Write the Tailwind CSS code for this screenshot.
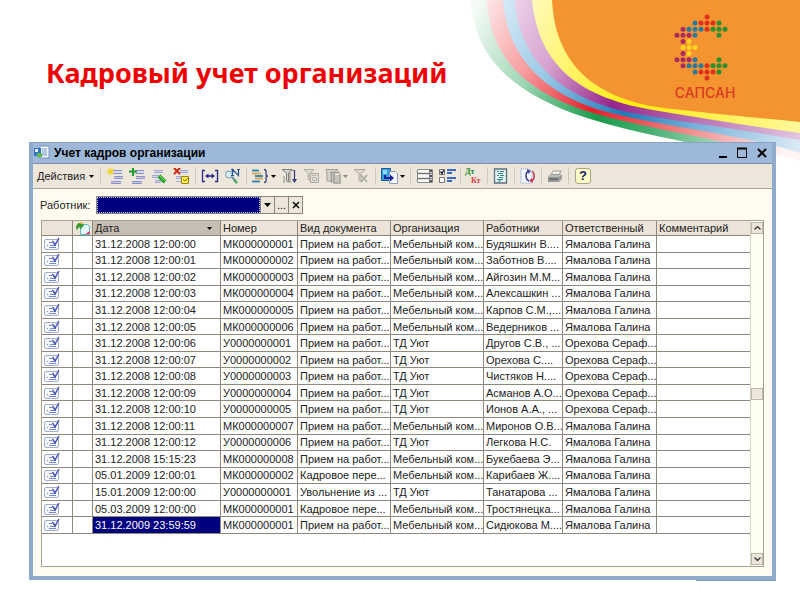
<!DOCTYPE html>
<html lang="ru">
  <head>
    <meta charset="UTF-8" />
    <meta name="viewport" content="width=device-width, initial-scale=1.0" />
    <title>Кадровый учет организаций</title>
    <script src="https://cdn.jsdelivr.net/npm/@tailwindcss/browser@4"></script>
  </head>
  <body class="relative min-h-screen overflow-x-hidden bg-white pb-4 font-['Liberation_Sans',Arial,sans-serif] text-[11px] leading-[14px] text-[#222222]">
    <!-- Фон: цветные полосы и логотип -->
    <svg class="absolute top-0 right-0 h-[180px] w-[340px]" viewBox="460 0 340 180" aria-label="САПСАН">
      <defs>
        <linearGradient id="g-green" gradientUnits="userSpaceOnUse" x1="480" y1="0" x2="800" y2="160">
          <stop offset="0" stop-color="#f4fbf6" /><stop offset="0.2" stop-color="#a4d8b8" /><stop offset="0.44" stop-color="#199a4c" /><stop offset="0.6" stop-color="#4cb176" /><stop offset="0.95" stop-color="#ffffff" />
        </linearGradient>
        <linearGradient id="g-red" gradientUnits="userSpaceOnUse" x1="480" y1="0" x2="800" y2="160">
          <stop offset="0" stop-color="#fdeeee" /><stop offset="0.2" stop-color="#f79c9e" /><stop offset="0.42" stop-color="#e4202a" /><stop offset="0.6" stop-color="#ea6a6a" /><stop offset="0.95" stop-color="#fff4f4" />
        </linearGradient>
        <linearGradient id="g-blue" gradientUnits="userSpaceOnUse" x1="480" y1="0" x2="800" y2="160">
          <stop offset="0" stop-color="#e9f4fb" /><stop offset="0.25" stop-color="#9dcbe6" /><stop offset="0.5" stop-color="#2079b8" /><stop offset="0.7" stop-color="#7ab0d8" /><stop offset="1" stop-color="#e2eff8" />
        </linearGradient>
        <linearGradient id="g-purple" gradientUnits="userSpaceOnUse" x1="480" y1="0" x2="800" y2="160">
          <stop offset="0" stop-color="#f6eaf5" /><stop offset="0.25" stop-color="#d7a3d0" /><stop offset="0.46" stop-color="#96268a" /><stop offset="0.7" stop-color="#b875b5" /><stop offset="1" stop-color="#e8cfe6" />
        </linearGradient>
        <linearGradient id="g-yellow" gradientUnits="userSpaceOnUse" x1="480" y1="0" x2="800" y2="160">
          <stop offset="0.05" stop-color="#fffde0" /><stop offset="0.52" stop-color="#ffec0a" /><stop offset="0.7" stop-color="#fff04a" /><stop offset="1" stop-color="#fffaa8" />
        </linearGradient>
      </defs>
      <path fill="url(#g-green)" d="M471 0C473 50 505 92 587 118C650 138 730 148 800 170V0Z" />
      <path fill="url(#g-red)" d="M487 0C489 56 525 92 590 112C650 130 730 140 800 161V0Z" />
      <path fill="url(#g-blue)" d="M503 0C506 52 540 94 607 112C660 126 740 134 800 153V0Z" />
      <path fill="url(#g-purple)" d="M515 0C518 55 555 96 627 112C680 122 740 129 800 140V0Z" />
      <path fill="url(#g-yellow)" d="M532 0C538 58 570 96 653 110C700 118 750 126 800 133V0Z" />
      <path fill="#f49430" d="M552 0C555 60 590 101 673 109C715 114 760 118 800 122V0Z" />
      <g id="dots"></g>
      <text x="705" y="98" text-anchor="middle" fill="#d93a20" class="font-['Inter',sans-serif] text-[14px] font-medium">САПСАН</text>
    </svg>

    <header class="flex h-[142px] items-start pt-[55px] pl-[46px]">
      <h1 class="font-['Noto_Sans',sans-serif] text-[27px] leading-9 font-bold text-[#f00000]">Кадровый учет организаций</h1>
    </header>

    <!-- Окно -->
    <main class="relative mr-6 ml-[29px] border-x-4 border-b-4 border-[#8fabcc] bg-[#fffbf0]">
      <div class="flex h-[21px] items-center border-t border-[#88a3c4] bg-[#9db8d8]">
        <svg class="ml-px size-4" viewBox="0 0 16 16">
          <rect x="6" y="1" width="9" height="12" fill="#f3f8ff" stroke="#7d94bb" />
          <path d="M8 4h5M8 6h5M8 8h5M8 10h5" stroke="#6d9ad0" />
          <path fill="#3270cc" d="M0 3h7v8H0z" /><path fill="#63b84c" d="M3 8h5v4H3z" /><path fill="#e8f0ff" d="M1 4h3v3H1z" />
        </svg>
        <h2 class="ml-1 grow text-[12px] font-bold text-black">Учет кадров организации</h2>
        <div class="flex text-black">
          <button class="flex h-5 w-5 items-center justify-center" aria-label="Свернуть"><svg class="size-3" viewBox="0 0 12 12"><path d="M3 10h8" stroke="currentColor" stroke-width="2" /></svg></button>
          <button class="flex h-5 w-5 items-center justify-center" aria-label="Развернуть"><svg class="size-3" viewBox="0 0 12 12"><path d="M1.500 1.500h9v9h-9z" fill="none" stroke="currentColor" /><path d="M1 1.500h10" stroke="currentColor" stroke-width="2" /></svg></button>
          <button class="flex h-5 w-5 items-center justify-center" aria-label="Закрыть"><svg class="size-3" viewBox="0 0 12 12"><path d="M2 2l8 8M10 2l-8 8" stroke="currentColor" stroke-width="2" /></svg></button>
        </div>
      </div>

      <!-- Панель инструментов -->
      <div class="flex h-[26px] items-center border-y border-t-[#8090a8] border-b-[#aaa598] bg-[#ece6db]">
        <button class="flex h-5 w-16 items-center gap-1 pl-1">Действия
          <svg class="h-[3px] w-[5px]" viewBox="0 0 5 3"><path d="M0 0h5L2.500 3z" /></svg>
        </button>
        <span class="mx-[3px] h-[18px] w-px bg-[#d2cbbd]"></span>
        <button class="flex w-[22px] justify-center" aria-label="Добавить">
          <svg class="size-4" viewBox="0 0 16 16"><path d="M6 2.500h9M6 5.500h9M7 8.500h9M7 10.500h9M4 13.500h10M4 15.500h10" stroke="#8b90c8" /><path d="M6 4h9M7 9.500h9M4 14.500h10" stroke="#c9cbea" /><path d="M3.500 0v7M0 3.500h7M1 1l5 5M6 1L1 6" stroke="#f4d422" stroke-width="1.200" /></svg>
        </button>
        <button class="flex w-[22px] justify-center" aria-label="Скопировать">
          <svg class="size-4" viewBox="0 0 16 16"><path d="M6 2.500h9M6 5.500h9M7 8.500h9M7 10.500h9M3 13.500h10M3 15.500h10" stroke="#8b90c8" /><path d="M6 4h9M7 9.500h9M3 14.500h10" stroke="#c9cbea" /><path d="M4 0v8M0 3.500h8" stroke="#1d9a2e" stroke-width="2" /></svg>
        </button>
        <button class="flex w-[22px] justify-center" aria-label="Изменить">
          <svg class="size-4" viewBox="0 0 16 16"><path d="M3 2.500h9M3 4.500h9M1 7.500h9M1 9.500h9M4 12.500h6M4 14.500h6" stroke="#a4a7d2" /><path d="M1 8.500h9M3 3.500h9M4 13.500h6" stroke="#d2d3ec" /><path d="M8 8l6 6" stroke="#27a32e" stroke-width="4" /><path d="M9 8l5 5" stroke="#82dc6e" /></svg>
        </button>
        <button class="flex w-[22px] justify-center" aria-label="Пометить на удаление">
          <svg class="size-4" viewBox="0 0 16 16"><path d="M7 2.500h8M7 4.500h8M3 8.500h6M3 10.500h6M3 13.500h5" stroke="#a4a7d2" /><path d="M7 3.500h8M3 9.500h6" stroke="#d2d3ec" /><path d="M1 0l6 6M7 0L1 6" stroke="#d02818" stroke-width="2" /><path d="M8.500 8.500h7v7h-7z" fill="#ffed4a" stroke="#98871c" /><path d="M10 11l2 2 3-3" fill="none" stroke="#8a7010" /></svg>
        </button>
        <span class="mx-[3px] h-[18px] w-px bg-[#d2cbbd]"></span>
        <button class="flex w-[22px] justify-center" aria-label="Интервал дат">
          <svg class="h-4 w-[18px]" viewBox="0 0 18 16"><path d="M4 2.500H1.500v11H4M14 2.500h2.500v11H14M5 8h8" fill="none" stroke="#2a2a8c" stroke-width="1.300" /><path d="M4 8l3.500-2.500v5zM14 8l-3.500-2.500v5z" fill="#2a2a8c" /></svg>
        </button>
        <button class="flex w-[22px] justify-center" aria-label="Найти по номеру">
          <svg class="size-4" viewBox="0 0 16 16"><circle cx="5" cy="6.500" r="3.500" fill="#d8f3f8" stroke="#6d98aa" /><path d="M8 9l5 6" stroke="#6d98a0" stroke-width="2" /><path d="M10 12l3 3" stroke="#3eb04a" stroke-width="2" /><path d="M8.500 8V1.500l6 6V1M7 1.500h3M13 1.500h3M7 7.500h3" fill="none" stroke="#29569c" stroke-width="1.200" /></svg>
        </button>
        <span class="mx-[3px] h-[18px] w-px bg-[#d2cbbd]"></span>
        <button class="flex w-7 items-center gap-0.5" aria-label="Ввести на основании">
          <svg class="ml-px h-4 w-[18px]" viewBox="0 0 18 16"><path d="M1 2.500h7M4 8h8M1 13.500h8" stroke="#3e8eb0" stroke-width="2" /><path d="M1 5.500h9M4 10.500h8" stroke="#d4a860" stroke-width="2" /><path d="M13 1.500c3 0 2 3 2 4.500s.5 2 2 2c-1.500 0-2 .5-2 2s1 4.500-2 4.500" fill="none" stroke="#414178" stroke-width="1.300" /></svg>
          <svg class="h-[3px] w-[5px]" viewBox="0 0 5 3"><path d="M0 0h5L2.500 3z" /></svg>
        </button>
        <button class="flex w-[22px] justify-center" aria-label="Отбор и сортировка">
          <svg class="size-4" viewBox="0 0 16 16"><path d="M1 1.500h10L7.500 5v9l-2-1V5z" fill="#d8d8d4" stroke="#82827e" /><path d="M3 8v7M9 4v11M10 2.500h4" stroke="#8a8a88" /><path d="M13.500 2v12" stroke="#3c3c84" stroke-width="1.300" /><path d="M11 11h5l-2.500 4z" fill="#3c3c84" /></svg>
        </button>
        <button class="flex w-[22px] justify-center" aria-label="Отбор по значению">
          <svg class="size-4" viewBox="0 0 16 16"><path d="M1 1.500h10L7 5.500v7l-2-1v-6z" fill="#dedad1" stroke="#b1aea5" /><path d="M7.500 5.500h8v9h-8z" fill="#e4e1d9" stroke="#aaa79f" /><path d="M9 7.500h5M9.500 9.500h4v3h-4z" stroke="#b5b3ac" fill="none" /></svg>
        </button>
        <button class="flex w-7 items-center gap-0.5" aria-label="История отборов">
          <svg class="ml-[3px] size-4" viewBox="0 0 16 16"><path d="M1 1.500h12L9 5v8H2V5z" fill="#d6d3ca" stroke="#a19f98" /><path d="M5 4.500h10M6.500 5v10M9 6v9h6V6" fill="none" stroke="#a19f98" stroke-width="1.500" /><path d="M10 7h4v7h-4z" fill="#c7c5be" /></svg>
          <svg class="h-[3px] w-[5px]" viewBox="0 0 5 3"><path fill="#8a877f" d="M0 0h5L2.500 3z" /></svg>
        </button>
        <button class="flex w-[22px] justify-center" aria-label="Отключить отбор">
          <svg class="size-4" viewBox="0 0 16 16"><path d="M1 1.500h11L8 5.500v8l-2-1v-7z" fill="#dedad1" stroke="#aaa79f" /><path d="M8 7l6 7M14 7l-6 7" stroke="#a8a69f" stroke-width="1.500" /></svg>
        </button>
        <span class="mx-[3px] h-[18px] w-px bg-[#d2cbbd]"></span>
        <button class="flex w-7 items-center gap-0.5" aria-label="Перейти">
          <svg class="ml-0.5 h-4 w-[17px]" viewBox="0 0 17 16"><path d="M.5.500h9v12h-9z" fill="#2fa0e0" stroke="#1c5b94" /><path d="M2 2h4v4H2z" fill="#8fe0f6" /><path d="M8.500 3.500h6l2 2v10h-8z" fill="#f4f7fc" stroke="#8d9db4" /><path d="M4 7v3h6" fill="none" stroke="#20209a" stroke-width="2" /><path d="M9 6.500v7l4-3.500z" fill="#20209a" /></svg>
          <svg class="h-[3px] w-[5px]" viewBox="0 0 5 3"><path d="M0 0h5L2.500 3z" /></svg>
        </button>
        <span class="mx-[3px] h-[18px] w-px bg-[#d2cbbd]"></span>
        <button class="flex w-[22px] justify-center" aria-label="Список">
          <svg class="size-4" viewBox="0 0 16 16"><path d="M.5 1.500h15v13H.5z" fill="#fff" stroke="#8a8a8a" /><path d="M0 5.500h16M0 10.500h16" stroke="#777" stroke-width="1.500" /><path d="M12.500 1v14" stroke="#777" /><path d="M13 2h2v2h-2zM13 7h2v2h-2zM13 12h2v2h-2z" fill="#555" /></svg>
        </button>
        <button class="flex w-[22px] justify-center" aria-label="Настройка списка">
          <svg class="h-4 w-[17px]" viewBox="0 0 17 16"><path d="M.5 1.500h5v5h-5zM.5 9.500h5v5h-5z" fill="#fff" stroke="#777" /><path d="M1.500 3.500l1.500 2 2-3.500" fill="none" stroke="#111" stroke-width="1.300" /><path d="M8 2h9M8 10h9" stroke="#3c68c0" stroke-width="2" /><path d="M8 5h5M8 13h5" stroke="#3c68c0" stroke-width="2" /></svg>
        </button>
        <span class="mx-0.5 h-[18px] w-px bg-[#d2cbbd]"></span>
        <button class="flex w-[22px] flex-col pl-0.5 text-left font-['Liberation_Serif',serif] text-[8px] leading-[9px] font-bold" aria-label="Проводки">
          <span class="text-[#1f8a2c]">Дт</span><span class="pl-1.5 text-[#e04040]">Кт</span>
        </button>
        <span class="mx-0.5 h-[18px] w-px bg-[#d2cbbd]"></span>
        <button class="flex w-[22px] justify-center" aria-label="Журнал">
          <svg class="size-4" viewBox="0 0 16 16"><path d="M1.500 1h12v14h-12z" fill="#e9f3f4" stroke="#587080" stroke-width="1.300" /><path d="M4 3.500h2M7 3.500h4M5 5.500h5M4 7.500h2M7 7.500h4M6 9.500h4M4 11.500h6M5 13h3" stroke="#2f8a92" /></svg>
        </button>
        <span class="mx-0.5 h-[18px] w-px bg-[#d2cbbd]"></span>
        <button class="flex w-[22px] justify-center" aria-label="Обновить">
          <svg class="size-4" viewBox="0 0 16 16"><path d="M1 1h8l3 3v11H1z" fill="#f3f7ff" stroke="#7fa2da" stroke-dasharray="1 1" /><path d="M9 3c-4 1-4 8 0 10" fill="none" stroke="#40409c" stroke-width="1.500" /><path d="M7 1l4 2-3 3z" fill="#40409c" /><path d="M11 13c4-1 4-8 1-10" fill="none" stroke="#c83c58" stroke-width="1.500" /><path d="M13 15l-4-2 3-3z" fill="#c83c58" /></svg>
        </button>
        <span class="mx-0.5 h-[18px] w-px bg-[#d2cbbd]"></span>
        <button class="flex w-[22px] justify-center" aria-label="Печать">
          <svg class="size-4" viewBox="0 0 16 16"><path d="M4 7l2-4h8l-2 4z" fill="#f1f0ed" stroke="#9a9a98" /><path d="M1 8l3-2h11v5l-3 3H1z" fill="#9b9b9a" /><path d="M1 8h11l3-2" fill="none" stroke="#dcdcda" /><path d="M2 11h9" stroke="#636363" stroke-width="1.500" /></svg>
        </button>
        <span class="mx-0.5 h-[18px] w-px bg-[#d2cbbd]"></span>
        <button class="ml-1 flex size-4 items-center justify-center rounded-[3px] border border-[#a9a58a] bg-[#ffffc8] text-[13px] leading-[14px] font-bold text-[#1c1c6e]" aria-label="Справка">?</button>
      </div>

      <!-- Отбор по работнику -->
      <div class="flex h-[31px] items-center pl-[7px]">
        <label for="worker" class="w-14">Работник:</label>
        <input id="worker" type="text" class="h-[18px] w-[165px] border border-[#8c877c] bg-[#000080] px-1 text-white outline-1 -outline-offset-2 outline-dotted outline-[#c8c8e8]" />
        <button class="flex h-[18px] w-[14px] items-center justify-center border-y border-r border-[#8c877c] bg-[#ece6db]" aria-label="Выбрать"><svg class="h-1 w-[7px]" viewBox="0 0 7 4"><path d="M0 0h7L3.500 4z" /></svg></button>
        <button class="h-[18px] w-[14px] border-y border-r border-[#8c877c] bg-[#ece6db] text-black">...</button>
        <button class="flex h-[18px] w-[14px] items-center justify-center border-y border-r border-[#8c877c] bg-[#ece6db]" aria-label="Очистить"><svg class="size-2" viewBox="0 0 8 8"><path d="M1 1l6 6M7 1L1 7" stroke="#111" stroke-width="1.600" /></svg></button>
      </div>

      <!-- Список документов -->
      <div class="mr-2 mb-[9px] ml-2 flex border border-[#a8a294] bg-white">
        <div class="min-h-[345px] min-w-0 grow">
          <table class="h-[313px] w-full table-fixed border-separate border-spacing-0 whitespace-nowrap">
            <colgroup>
              <col class="w-[31px]" /><col class="w-5" /><col class="w-[128px]" /><col class="w-[77px]" /><col class="w-[93px]" /><col class="w-[93px]" /><col class="w-[79px]" /><col class="w-[94px]" /><col />
            </colgroup>
            <thead class="bg-[#ece4d9] text-left">
              <tr>
                <th class="border-r border-b border-[#8f897c] p-0"></th>
                <th class="border-r border-b border-[#8f897c] p-0">
                  <svg class="mx-auto h-[14px] w-4" viewBox="0 0 16 14"><path d="M5.500 3.500h7l2 2v8h-9z" fill="#e4f8fa" stroke="#58b8c4" /><path d="M1 7c0-5 5-7 8-3L6 8 4 6 2 9z" fill="#3c9a34" /><path d="M4 3l3-2 1 2z" fill="#e0b030" /><path d="M10 13l5-3v3z" fill="#e04070" /></svg>
                </th>
                <th class="border-r border-b border-[#8f897c] bg-[#c6beb3] p-0 pr-2 pl-0.5 font-normal">
                  <div class="flex items-center justify-between">Дата<svg class="h-[3px] w-[5px]" viewBox="0 0 5 3"><path d="M0 0h5L2.500 3z" /></svg></div>
                </th>
                <th class="border-r border-b border-[#8f897c] p-0 pl-0.5 font-normal">Номер</th>
                <th class="border-r border-b border-[#8f897c] p-0 pl-0.5 font-normal">Вид документа</th>
                <th class="border-r border-b border-[#8f897c] p-0 pl-0.5 font-normal">Организация</th>
                <th class="border-r border-b border-[#8f897c] p-0 pl-0.5 font-normal">Работники</th>
                <th class="border-r border-b border-[#8f897c] p-0 pl-0.5 font-normal">Ответственный</th>
                <th class="border-b border-[#8f897c] p-0 pl-0.5 font-normal">Комментарий</th>
              </tr>
            </thead>
            <tbody id="rows"></tbody>
          </table>
        </div>
        <div class="flex w-[15px] flex-col items-center justify-between border-l border-[#d8d4c4] bg-[#fffff4] py-px">
          <button class="flex h-3 w-3 items-center justify-center border border-[#bdb8a8] bg-[#ece6db]" aria-label="Вверх"><svg class="h-1 w-[7px]" viewBox="0 0 7 4"><path d="M.5 3.500l3-3 3 3" fill="none" stroke="#333" stroke-width="1.300" /></svg></button>
          <span class="h-3 w-3 border border-[#bdb8a8] bg-[#ece6db]"></span>
          <button class="flex h-3 w-3 items-center justify-center border border-[#bdb8a8] bg-[#ece6db]" aria-label="Вниз"><svg class="h-1 w-[7px]" viewBox="0 0 7 4"><path d="M.5.500l3 3 3-3" fill="none" stroke="#333" stroke-width="1.300" /></svg></button>
        </div>
      </div>
    </main>
    <div class="mr-6 ml-auto h-px w-20 bg-[#8a9cb4]"></div>

    <script>
      const docs = [
        ["31.12.2008 12:00:00", "МК000000001", "Прием на работ...", "Мебельный ком...", "Будяшкин В....", "Ямалова Галина"],
        ["31.12.2008 12:00:01", "МК000000002", "Прием на работ...", "Мебельный ком...", "Заботнов В....", "Ямалова Галина"],
        ["31.12.2008 12:00:02", "МК000000003", "Прием на работ...", "Мебельный ком...", "Айгозин М.М...", "Ямалова Галина"],
        ["31.12.2008 12:00:03", "МК000000004", "Прием на работ...", "Мебельный ком...", "Алексашкин ...", "Ямалова Галина"],
        ["31.12.2008 12:00:04", "МК000000005", "Прием на работ...", "Мебельный ком...", "Карпов С.М.,...", "Ямалова Галина"],
        ["31.12.2008 12:00:05", "МК000000006", "Прием на работ...", "Мебельный ком...", "Ведерников ...", "Ямалова Галина"],
        ["31.12.2008 12:00:06", "У0000000001", "Прием на работ...", "ТД Уют", "Другов С.В., ...", "Орехова Сераф..."],
        ["31.12.2008 12:00:07", "У0000000002", "Прием на работ...", "ТД Уют", "Орехова С....", "Орехова Сераф..."],
        ["31.12.2008 12:00:08", "У0000000003", "Прием на работ...", "ТД Уют", "Чистяков Н....", "Орехова Сераф..."],
        ["31.12.2008 12:00:09", "У0000000004", "Прием на работ...", "ТД Уют", "Асманов А.О...", "Орехова Сераф..."],
        ["31.12.2008 12:00:10", "У0000000005", "Прием на работ...", "ТД Уют", "Ионов А.А., ...", "Орехова Сераф..."],
        ["31.12.2008 12:00:11", "МК000000007", "Прием на работ...", "Мебельный ком...", "Миронов О.В...", "Ямалова Галина"],
        ["31.12.2008 12:00:12", "У0000000006", "Прием на работ...", "ТД Уют", "Легкова Н.С.", "Ямалова Галина"],
        ["31.12.2008 15:15:23", "МК000000008", "Прием на работ...", "Мебельный ком...", "Букебаева Э...", "Ямалова Галина"],
        ["05.01.2009 12:00:01", "МК000000002", "Кадровое пере...", "Мебельный ком...", "Карибаев Ж....", "Ямалова Галина"],
        ["15.01.2009 12:00:00", "У0000000001", "Увольнение из ...", "ТД Уют", "Танатарова ...", "Ямалова Галина"],
        ["05.03.2009 12:00:00", "МК000000001", "Кадровое пере...", "Мебельный ком...", "Тростянецка...", "Ямалова Галина"],
        ["31.12.2009 23:59:59", "МК000000001", "Прием на работ...", "Мебельный ком...", "Сидюкова М....", "Ямалова Галина"],
      ];
      const icon = `<svg class="ml-0.5 h-[14px] w-4" viewBox="0 0 16 14"><rect x="0.5" y="2.500" width="14" height="10" rx="1.500" fill="#f6f8ff" stroke="#a3adcc"/><path d="M3 8.500h1M6 8.500h6M5 10.500h7M5 5.500h3" stroke="#7a8ac8"/><path d="M8.500 4l2.500 4 4-7" fill="none" stroke="#4a55b8" stroke-width="1.500"/></svg>`;
      const cell = "overflow-hidden border-r border-b border-[#8f897c] p-0 pl-0.5";
      const active = "overflow-hidden border-r border-b border-[#8f897c] bg-[#000080] p-0 pl-0.5 text-white";
      document.getElementById("rows").innerHTML = docs.map((d, i) =>
        `<tr><td class="border-r border-b border-[#8f897c] p-0">${icon}</td><td class="${cell}"></td>` +
        d.map((t, j) => `<td class="${i === docs.length - 1 && j === 0 ? active : cell}">${t}</td>`).join("") +
        `<td class="border-b border-[#8f897c] p-0"></td></tr>`
      ).join("");

      // точки логотипа
      const colors = { r: "#e0301c", b: "#2a7a9e", g: "#2a8f2e", p: "#a82c60", y: "#ffd420" };
      const logo = ["     r", "   brrrg", " pbbbrggg", "pppb   g", " py", " yyy", " py", "pppb   g", " pbbbrggg", "   brrrg", "     r"];
      document.getElementById("dots").innerHTML = logo.map((line, y) =>
        [...line].map((c, x) => colors[c] ? `<circle cx="${677 + x * 6}" cy="${17 + y * 6.1}" r="2.5" fill="${colors[c]}"/>` : "").join("")
      ).join("");
    </script>
  </body>
</html>
